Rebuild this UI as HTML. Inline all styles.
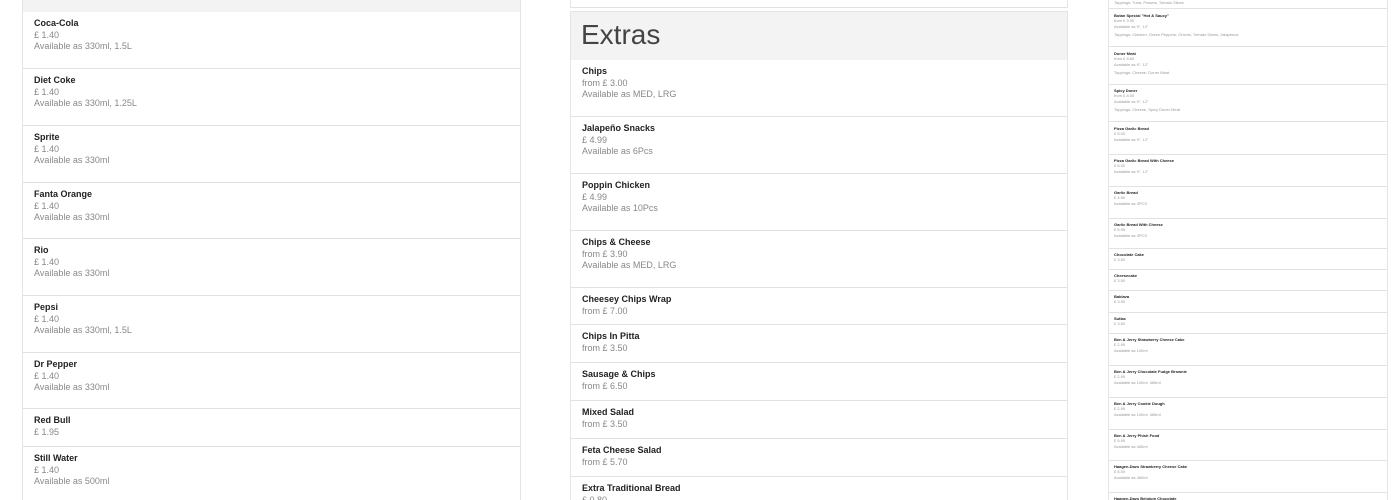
<!DOCTYPE html>
<html><head><meta charset="utf-8"><style>
*{margin:0;padding:0;box-sizing:border-box}
html,body{width:1400px;height:500px;overflow:hidden}
body{background:#fff;font-family:"Liberation Sans",sans-serif;position:relative}
.panel{position:absolute;border-left:1px solid #e4e4e4;border-right:1px solid #e4e4e4;background:#fff;overflow:hidden}
.it{position:absolute;left:0;right:0;border-bottom:1px solid #e2e2e2}
.L .it,.M .it{padding:6px 0 0 11px;font-size:9px;line-height:11.5px;color:#888}
.it b{display:block;color:#222;font-weight:bold}
.R .it{padding:3px 0 0 5px;font-size:4px;line-height:5.3px;color:#999}
.R .it .tp{margin-top:3px}
</style></head><body>

<div class="panel L" style="left:22px;top:0;width:499px;height:500px">
 <div style="position:absolute;left:0;right:0;top:0;height:12px;background:#f3f3f3"></div>
 <div class="it" style="top:12px;height:57px"><b>Coca-Cola</b>£ 1.40<br>Available as 330ml, 1.5L</div>
 <div class="it" style="top:69px;height:57px"><b>Diet Coke</b>£ 1.40<br>Available as 330ml, 1.25L</div>
 <div class="it" style="top:126px;height:57px"><b>Sprite</b>£ 1.40<br>Available as 330ml</div>
 <div class="it" style="top:183px;height:56px"><b>Fanta Orange</b>£ 1.40<br>Available as 330ml</div>
 <div class="it" style="top:239px;height:57px"><b>Rio</b>£ 1.40<br>Available as 330ml</div>
 <div class="it" style="top:296px;height:57px"><b>Pepsi</b>£ 1.40<br>Available as 330ml, 1.5L</div>
 <div class="it" style="top:353px;height:56px"><b>Dr Pepper</b>£ 1.40<br>Available as 330ml</div>
 <div class="it" style="top:409px;height:38px"><b>Red Bull</b>£ 1.95</div>
 <div class="it" style="top:447px;height:60px"><b>Still Water</b>£ 1.40<br>Available as 500ml</div>
</div>

<div class="panel M" style="left:570px;top:-2px;width:498px;height:10px;border-bottom:1px solid #e2e2e2"></div>
<div class="panel M" style="left:570px;top:11px;width:498px;height:489px;border-top:1px solid #e4e4e4">
 <div style="position:absolute;left:0;right:0;top:0;height:48px;background:#f3f3f3;padding:7px 0 0 10px;font-size:28px;color:#444;font-weight:300">Extras</div>
 <div class="it" style="top:48px;height:57px"><b>Chips</b>from £ 3.00<br>Available as MED, LRG</div>
 <div class="it" style="top:105px;height:57px"><b>Jalapeño Snacks</b>£ 4.99<br>Available as 6Pcs</div>
 <div class="it" style="top:162px;height:57px"><b>Poppin Chicken</b>£ 4.99<br>Available as 10Pcs</div>
 <div class="it" style="top:219px;height:57px"><b>Chips &amp; Cheese</b>from £ 3.90<br>Available as MED, LRG</div>
 <div class="it" style="top:276px;height:37px"><b>Cheesey Chips Wrap</b>from £ 7.00</div>
 <div class="it" style="top:313px;height:38px"><b>Chips In Pitta</b>from £ 3.50</div>
 <div class="it" style="top:351px;height:38px"><b>Sausage &amp; Chips</b>from £ 6.50</div>
 <div class="it" style="top:389px;height:38px"><b>Mixed Salad</b>from £ 3.50</div>
 <div class="it" style="top:427px;height:38px"><b>Feta Cheese Salad</b>from £ 5.70</div>
 <div class="it" style="top:465px;height:40px"><b>Extra Traditional Bread</b>£ 0.80</div>
</div>

<div class="panel R" style="left:1108px;top:0;width:280px;height:500px">
 <div class="it" style="top:-6px;height:15px"><span style="position:absolute;top:6px">Toppings: Tuna, Prawns, Tomato Slices</span></div>
 <div class="it" style="top:10px;height:37px"><b>Botan Special "Hot &amp; Saucy"</b>from £ 9.90<br>Available as 9", 12"<div class="tp">Toppings: Chicken, Green Peppers, Onions, Tomato Slices, Jalapenos</div></div>
 <div class="it" style="top:48px;height:37px"><b>Doner Meat</b>from £ 8.60<br>Available as 9", 12"<div class="tp">Toppings: Cheese, Doner Meat</div></div>
 <div class="it" style="top:85px;height:37px"><b>Spicy Doner</b>from £ 8.00<br>Available as 9", 12"<div class="tp">Toppings: Cheese, Spicy Doner Meat</div></div>
 <div class="it" style="top:123px;height:32px"><b>Pizza Garlic Bread</b>£ 5.00<br>Available as 9", 12"</div>
 <div class="it" style="top:155px;height:32px"><b>Pizza Garlic Bread With Cheese</b>£ 6.50<br>Available as 9", 12"</div>
 <div class="it" style="top:187px;height:32px"><b>Garlic Bread</b>£ 4.50<br>Available as 4PCS</div>
 <div class="it" style="top:219px;height:30px"><b>Garlic Bread With Cheese</b>£ 5.95<br>Available as 4PCS</div>
 <div class="it" style="top:249px;height:21px"><b>Chocolate Cake</b>£ 3.50</div>
 <div class="it" style="top:270px;height:21px"><b>Cheesecake</b>£ 3.50</div>
 <div class="it" style="top:291px;height:22px"><b>Baklava</b>£ 3.50</div>
 <div class="it" style="top:313px;height:21px"><b>Sutlac</b>£ 3.50</div>
 <div class="it" style="top:334px;height:32px"><b>Ben &amp; Jerry Strawberry Cheese Cake</b>£ 2.95<br>Available as 100ml</div>
 <div class="it" style="top:366px;height:32px"><b>Ben &amp; Jerry Chocolate Fudge Brownie</b>£ 2.95<br>Available as 100ml, 465ml</div>
 <div class="it" style="top:398px;height:32px"><b>Ben &amp; Jerry Cookie Dough</b>£ 2.95<br>Available as 100ml, 465ml</div>
 <div class="it" style="top:430px;height:31px"><b>Ben &amp; Jerry Phish Food</b>£ 5.95<br>Available as 465ml</div>
 <div class="it" style="top:461px;height:32px"><b>Haagen-Dazs Strawberry Cheese Cake</b>£ 6.50<br>Available as 460ml</div>
 <div class="it" style="top:493px;height:32px"><b>Haagen-Dazs Belgium Chocolate</b></div>
</div>
</body></html>
